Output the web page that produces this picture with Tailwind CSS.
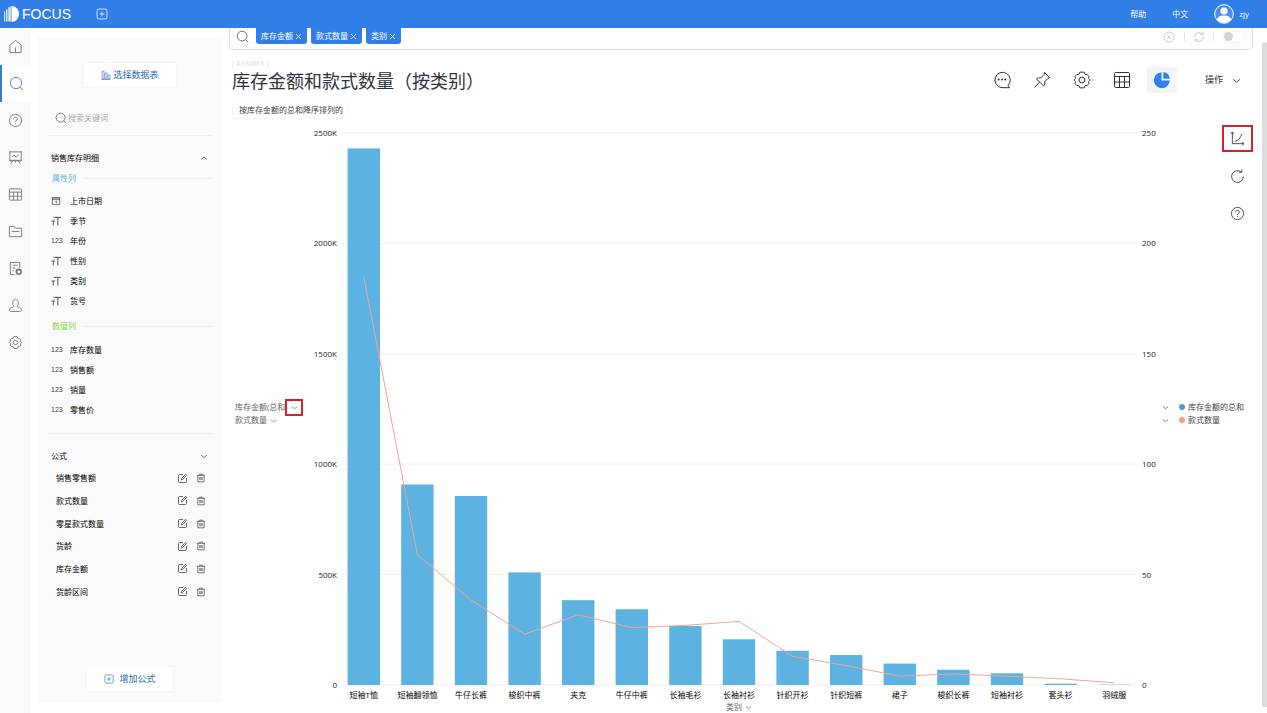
<!DOCTYPE html>
<html lang="zh-CN">
<head>
<meta charset="utf-8">
<title>FOCUS</title>
<script src="https://cdn.jsdelivr.net/npm/@tailwindcss/browser@4"></script>
</head>
<body class="h-screen overflow-hidden flex flex-col bg-white font-['Open_Sans','Noto_Sans_CJK_SC',sans-serif] text-[8px] leading-[10px] text-[#222]">

<svg class="hidden">
  <defs>
    <g id="search" fill="none" stroke="currentColor"><circle cx="7.5" cy="7.5" r="6"/><path d="M12 12l3 3"/></g>
    <g id="help" fill="none" stroke="currentColor"><circle cx="8" cy="8" r="6.5"/><path d="M6 6.6c0-1.3.9-2.1 2-2.1s2 .8 2 1.9c0 1.5-2 1.5-2 3.1M8 10.8v1"/></g>
    <g id="grid" fill="none" stroke="currentColor"><rect x="1.500" y="2" width="13" height="12" rx="1"/><path d="M1.500 5.500h13M1.500 9.800h13M5.800 5.500v8.500M10.200 5.500v8.500"/></g>
    <g id="gear" fill="none" stroke="currentColor"><path d="M6.300 1.700h3.400l.7 1.700 1.800.3 1.400 1.500-.4 1.500 1.300 1.300-1.300 1.300.4 1.500-1.400 1.500-1.800.3-.7 1.700H6.300l-.7-1.700-1.800-.3-1.400-1.500.4-1.500L1.500 8l1.300-1.300-.4-1.500 1.400-1.500 1.800-.3z" stroke-linejoin="round"/><circle cx="8" cy="8" r="2.300"/></g>
    <g id="down" fill="none" stroke="currentColor" stroke-width=".8"><path d="M1 3l3 2.500L7 3"/></g>
    <g id="up" fill="none" stroke="currentColor" stroke-width=".8"><path d="M1 5.500L4 3l3 2.500"/></g>
    <g id="close" fill="none" stroke="currentColor" stroke-width=".8"><path d="M1 1l5 5M6 1l-5 5"/></g>
    <g id="plusbox" fill="none" stroke="currentColor"><rect x="1" y="1" width="10" height="10" rx="2"/><path d="M6 3.500v5M3.500 6h5"/></g>
    <g id="text" fill="none" stroke="currentColor"><path d="M3 1.500h8M7.500 1.500v9M.5 5.500h4M2.500 5.500v5"/></g>
    <g id="date" fill="none" stroke="currentColor" stroke-width=".8"><path d="M1.500 2h8v7.500h-8zM.5 2h10M1.500 4h8M5 6l.8-.6V8.500"/></g>
    <g id="edit" fill="none" stroke="currentColor" stroke-width=".8"><path d="M6 1.500H2.500a1 1 0 0 0-1 1v6a1 1 0 0 0 1 1H8.500a1 1 0 0 0 1-1V5"/><path d="M4.300 7l.4-1.700L8.500 1.300l1 1L5.800 6.500z"/></g>
    <g id="trash" fill="none" stroke="currentColor" stroke-width=".8"><path d="M1 2.500h9M4 2.500V1.300h3v1.200M2 2.500v7.200h7V2.500M4.200 4.500v3.300M5.500 4.500v3.300M6.800 4.500v3.300"/></g>
  </defs>
</svg>

<header class="h-7 shrink-0 flex items-center bg-[#317ee9] text-white pl-1 pr-[18px]">
  <svg class="w-4 h-4" viewBox="0 0 16 16" fill="#fff"><path d="M7.500 0a7.500 8 0 0 1 0 16z"/><path d="M4.300 1.500L6.800.5v15H4.300z" opacity=".85"/><path d="M2 3.500h1.600v12H2z" opacity=".8"/><path d="M0 5.500h1.300v10H0z" opacity=".7"/></svg>
  <span class="ml-[2px] font-['Liberation_Sans',sans-serif] text-[14px] leading-[18px]">FOCUS</span>
  <button class="ml-[25px]" aria-label="新建"><svg class="w-3 h-3 opacity-80" viewBox="0 0 12 12"><use href="#plusbox"/></svg></button>
  <a href="#" class="ml-auto">帮助</a>
  <a href="#" class="ml-[26px]">中文</a>
  <a href="#" class="ml-[26px] flex items-center gap-[5px]"><svg class="w-5 h-5" viewBox="0 0 20 20"><circle cx="10" cy="10" r="9.300" fill="#4a8bea" stroke="#fff"/><circle cx="10" cy="7" r="3.600" fill="#fff"/><path d="M3 15.500c1-3.500 4-4 7-4s6 .5 7 4a9 9 0 0 1-14 0z" fill="#fff"/></svg>zjy</a>
</header>

<div class="flex-1 min-h-0 flex">
  <nav class="w-[31px] shrink-0 bg-[#fafafa] flex flex-col text-[#777]">
    <a href="#" aria-label="首页" class="h-[37px] flex items-center justify-center"><svg class="w-[15px] h-[15px]" viewBox="0 0 16 16" fill="none" stroke="currentColor"><path d="M2 6.500L8 1.500l6 5v8H2zM8 9v5.500"/></svg></a>
    <a href="#" aria-label="搜索" class="h-[37px] flex items-center justify-center bg-white border-l-2 border-[#317ad8] pr-px text-[#4f88c4]"><svg class="w-[15px] h-[15px]" viewBox="0 0 16 16"><use href="#search"/></svg></a>
    <a href="#" aria-label="帮助" class="h-[37px] flex items-center justify-center"><svg class="w-[15px] h-[15px]" viewBox="0 0 16 16"><use href="#help"/></svg></a>
    <a href="#" aria-label="看板" class="h-[37px] flex items-center justify-center"><svg class="w-[15px] h-[15px]" viewBox="0 0 16 16" fill="none" stroke="currentColor"><path d="M1 2h14M2 2v9h12V2M1 11.500h14M5 11.500l-2 3M11 11.500l2 3M8 11.500v2M4.500 7.500l2-2 2 2 3-2.500"/></svg></a>
    <a href="#" aria-label="数据表" class="h-[37px] flex items-center justify-center"><svg class="w-[15px] h-[15px]" viewBox="0 0 16 16"><use href="#grid"/></svg></a>
    <a href="#" aria-label="资源" class="h-[37px] flex items-center justify-center"><svg class="w-[15px] h-[15px]" viewBox="0 0 16 16" fill="none" stroke="currentColor"><path d="M1.500 13.500v-11h5l1.500 2h6.500v9zM4 8h8"/></svg></a>
    <a href="#" aria-label="任务" class="h-[37px] flex items-center justify-center"><svg class="w-[15px] h-[15px]" viewBox="0 0 16 16" fill="none" stroke="currentColor"><path d="M7 14.500H2.500v-13h10V7M5 4.500h5M5 7.500h3M5 10.500h1.500"/><circle cx="11.500" cy="11.500" r="2.500" stroke-width="1.800"/></svg></a>
    <a href="#" aria-label="用户" class="h-[37px] flex items-center justify-center"><svg class="w-[15px] h-[15px]" viewBox="0 0 16 16" fill="none" stroke="currentColor"><path d="M6.300 9C4.200 7 4.500 1.500 8 1.500s3.800 5.500 1.700 7.500c0 .8 4.800.8 4.800 4 0 1-1 1.300-2 1.300h-9c-1 0-2-.3-2-1.300 0-3.200 4.800-3.200 4.800-4z"/></svg></a>
    <a href="#" aria-label="设置" class="h-[37px] flex items-center justify-center"><svg class="w-[15px] h-[15px]" viewBox="0 0 16 16"><use href="#gear"/></svg></a>
  </nav>

  <aside class="w-[184px] shrink-0 ml-[7px] mt-[9px] mb-[10px] bg-[#fafafa] flex flex-col px-[10px] text-black">
    <button class="self-center mt-[26px] w-[92px] h-6 shrink-0 bg-white shadow-[0_0_2px_#eee] flex items-center justify-center gap-[2px] text-[9px] text-[#2f6fb5]"><svg class="w-[10px] h-[10px]" viewBox="0 0 10 10" fill="none" stroke="currentColor" stroke-width=".6"><path d="M1 1h2v8H1zM4 3h2v6H4zM7 5h2v4H7zM.5 9.500h9"/></svg>选择数据表</button>
    <label class="mt-[23px] h-4 shrink-0 flex items-center pl-[7px] gap-[1px]"><svg class="w-3 h-3 text-[#555]" viewBox="0 0 16 16"><use href="#search"/></svg><input type="text" aria-label="搜索关键词" placeholder="搜索关键词" class="flex-1 min-w-0 outline-none placeholder:text-[#aaa]"></label>
    <hr class="mt-[9px] border-[#efefef]">
    <button class="mt-[17px] h-[10px] shrink-0 flex items-center justify-between pl-[3px] pr-1">销售库存明细<svg class="w-2 h-2 text-[#555]" viewBox="0 0 8 8"><use href="#up"/></svg></button>
    <div class="mt-[10px] flex items-center gap-2 pl-1 text-[#5db4d4]">属性列<hr class="flex-1 border-[#efefef]"></div>
    <ul id="attrs" class="mt-2"></ul>
    <div class="mt-[10px] flex items-center gap-2 pl-1 text-[#86d24a]">数值列<hr class="flex-1 border-[#efefef]"></div>
    <ul id="measures" class="mt-[9px]"></ul>
    <hr class="mt-[13px] border-[#efefef]">
    <button class="mt-[17px] h-[10px] shrink-0 flex items-center justify-between pl-[3px] pr-1">公式<svg class="w-2 h-2 text-[#555]" viewBox="0 0 8 8"><use href="#down"/></svg></button>
    <ul id="formulas" class="mt-[6px] h-[136px] shrink-0 flex flex-col justify-around"></ul>
    <button class="self-center mt-auto mb-[12px] w-[86px] h-6 shrink-0 bg-white shadow-[0_0_2px_#eee] flex items-center justify-center gap-[5px] text-[9px] text-[#2f6fb5]"><svg class="w-[10px] h-[10px]" viewBox="0 0 12 12" stroke-width=".8"><use href="#plusbox"/></svg>增加公式</button>
  </aside>

  <main class="flex-1 min-w-0 ml-[7px] flex flex-col">
    <div class="h-[22px] shrink-0 flex items-start border border-t-0 border-[#ddd] rounded-b-[5px] pl-[6px]">
      <svg class="w-[13px] h-[13px] mt-[2px] text-[#555]" viewBox="0 0 16 16"><use href="#search"/></svg>
      <div class="ml-[7px] flex gap-1 text-white">
        <button class="h-4 px-[5px] bg-[#317ee9] rounded-b-[3px] flex items-center gap-[2px]">库存金额<svg class="w-[7px] h-[7px]" viewBox="0 0 7 7"><use href="#close"/></svg></button>
        <button class="h-4 px-[5px] bg-[#317ee9] rounded-b-[3px] flex items-center gap-[2px]">款式数量<svg class="w-[7px] h-[7px]" viewBox="0 0 7 7"><use href="#close"/></svg></button>
        <button class="h-4 px-[5px] bg-[#317ee9] rounded-b-[3px] flex items-center gap-[2px]">类别<svg class="w-[7px] h-[7px]" viewBox="0 0 7 7"><use href="#close"/></svg></button>
      </div>
      <div class="ml-auto h-[17px] pr-[6px] flex items-center text-[#ccc]">
        <button aria-label="清除"><svg class="w-3 h-3" viewBox="0 0 12 12" fill="none" stroke="currentColor"><circle cx="6" cy="6" r="5"/><path d="M4.300 4.300l3.400 3.400M7.700 4.300L4.300 7.700"/></svg></button>
        <span class="ml-[9px] w-px h-2 bg-[#e2e2e2]"></span>
        <button class="ml-[8px]" aria-label="刷新"><svg class="w-3 h-3" viewBox="0 0 12 12" fill="none" stroke="currentColor"><path d="M1.500 6A4.500 4.500 0 0 1 9.500 3.200M10.500 6A4.500 4.500 0 0 1 2.500 8.800M10 1v2.500H7.500M2 11V8.500h2.500"/></svg></button>
        <span class="ml-[8px] w-px h-2 bg-[#e2e2e2]"></span>
        <input type="checkbox" aria-label="自动" class="ml-[8px] appearance-none w-6 h-3 rounded-full border border-[#f2f2f2] before:block before:w-[9px] before:h-[9px] before:rounded-full before:bg-[#d2d2d2] before:ml-px">
      </div>
    </div>

    <div class="mt-[9px] h-9 shrink-0 flex">
      <div class="pl-[3px]">
        <p class="text-[7px] leading-[10px] text-[#ddd]">[ ANSWER ]</p>
        <h1 class="text-[18px] leading-6 text-[#2b3442]">库存金额和款式数量（按类别）</h1>
      </div>
      <div class="ml-auto mt-[8px] h-[26px] flex items-center gap-[10px] text-[#2b3442]">
        <button aria-label="评论" class="w-[30px] h-[26px] flex items-center justify-center"><svg class="w-[18px] h-[18px]" viewBox="0 0 18 18" fill="none" stroke="currentColor"><path d="M15 14.500A7.700 7.700 0 1 0 9 16.700h7.500z"/><g fill="currentColor" stroke="none"><circle cx="5.700" cy="8.500" r="1"/><circle cx="9" cy="8.500" r="1"/><circle cx="12.300" cy="8.500" r="1"/></g></svg></button>
        <button aria-label="固定" class="w-[30px] h-[26px] flex items-center justify-center"><svg class="w-[18px] h-[18px]" viewBox="0 0 18 18" fill="none" stroke="currentColor" stroke-linejoin="round"><path d="M11.500 1.500l5 5-1.500.8-3.300 3.500c.4 1.800 0 3-1 4.200L3.500 8c1.200-1.200 2.600-1.400 4.200-1L11 3.500zM6.500 11.200l-5 5.300"/></svg></button>
        <button aria-label="设置" class="w-[30px] h-[26px] flex items-center justify-center"><svg class="w-5 h-5" viewBox="0 0 16 16" stroke-width=".8"><use href="#gear"/></svg></button>
        <button aria-label="表格" class="w-[30px] h-[26px] flex items-center justify-center"><svg class="w-[18px] h-[18px]" viewBox="0 0 18 18" fill="none" stroke="currentColor"><rect x="1.500" y="1.500" width="15" height="15" rx="1"/><path d="M1.500 5.500h15M1.500 11h15M6.500 5.500v11M11.500 5.500v11"/></svg></button>
        <button aria-label="图表" class="w-[30px] h-[26px] flex items-center justify-center bg-[#f3f4f5] rounded-[3px]"><svg class="w-[18px] h-[18px]" viewBox="0 0 18 18" fill="#317ee9"><path d="M8.500 1.200V9.500h8.300A8 8 0 1 1 8.500 1.200z"/><path d="M10.300 1a7.500 7.500 0 0 1 6.500 6.700h-6.500z"/></svg></button>
      </div>
      <button class="ml-[28px] mr-[12px] mt-[8px] h-[26px] flex items-center gap-[9px] text-[9px] text-[#333]">操作<svg class="w-[9px] h-[9px]" viewBox="0 0 8 8"><use href="#down"/></svg></button>
    </div>

    <div class="mt-[6px] ml-[3px] h-[18px] shrink-0 self-start border border-[#f8f8f8] px-[6px] flex items-center text-[#444]">按库存金额的总和降序排列的</div>

    <section class="flex-1 min-h-0 flex">
      <div class="w-[76px] shrink-0 pl-[6px] pb-[5px] flex flex-col justify-center gap-[3px] text-[#666]">
        <div class="h-[10px] flex items-center whitespace-nowrap">库存金额(总和<button aria-label="库存金额选项" class="w-[18px] h-[17px] shrink-0 border-2 border-[#d2232a] flex items-center justify-center"><svg class="w-[7px] h-[7px]" viewBox="0 0 8 8"><use href="#down"/></svg></button></div>
        <button class="h-[10px] flex items-center gap-[3px]">款式数量<svg class="w-[7px] h-[7px]" viewBox="0 0 8 8"><use href="#down"/></svg></button>
      </div>
      <div class="w-8 shrink-0 pt-[9px] pb-[23px] flex flex-col justify-between text-right text-[#222]">
        <span>2500K</span><span>2000K</span><span>1500K</span><span>1000K</span><span>500K</span><span>0</span>
      </div>
      <div class="flex-1 min-w-0 pt-[14px] pb-px flex flex-col">
        <div class="flex-1 min-h-0">
          <svg class="block w-full h-full overflow-visible" viewBox="0 0 804 552" preserveAspectRatio="none">
            <path d="M5 0H799M5 110.400H799M5 220.800H799M5 331.200H799M5 441.600H799M5 552H799" stroke="#f2f2f2" vector-effect="non-scaling-stroke"/>
            <g id="bars" fill="#5cb2e1"></g>
            <polyline id="line" fill="none" stroke="#f0a592" stroke-width="1" vector-effect="non-scaling-stroke"/>
          </svg>
        </div>
        <div id="cats" class="mt-[5px] h-[10px] shrink-0 grid grid-cols-[repeat(15,minmax(0,1fr))] text-center whitespace-nowrap text-black"></div>
        <button class="mt-[2px] h-[10px] shrink-0 self-center flex items-center gap-[3px] text-[#666]">类别<svg class="w-[7px] h-[7px]" viewBox="0 0 8 8"><use href="#down"/></svg></button>
      </div>
      <div class="w-5 shrink-0 pl-px pt-[9px] pb-[23px] flex flex-col justify-between text-[#222]">
        <span>250</span><span>200</span><span>150</span><span>100</span><span>50</span><span>0</span>
      </div>
      <div class="w-[92px] shrink-0 pt-[6px] flex flex-col text-[#444]">
        <div class="self-end flex flex-col gap-[11px]">
          <button aria-label="坐标轴" class="w-[31px] h-[27px] border-2 border-[#d2232a] flex items-center justify-center"><svg class="w-[15px] h-[15px]" viewBox="0 0 16 16" fill="none" stroke="currentColor"><path d="M2.500 1v12.500H15M1 3l1.500-2L4 3M13 12l2 1.500-2 1.500M5 11c4-.5 6-3.500 7.500-8"/></svg></button>
          <button aria-label="刷新" class="w-[31px] h-[26px] flex items-center justify-center"><svg class="w-[15px] h-[15px]" viewBox="0 0 16 16" fill="none" stroke="currentColor"><path d="M14.300 8A6.300 6.300 0 1 1 12 3.200M12.500.8v2.700H9.800"/></svg></button>
          <button aria-label="帮助" class="w-[31px] h-[26px] flex items-center justify-center"><svg class="w-[15px] h-[15px]" viewBox="0 0 16 16"><use href="#help"/></svg></button>
        </div>
        <div class="my-auto pb-[113px] pl-px flex flex-col gap-[3px]">
          <button class="flex items-center"><svg class="w-[7px] h-[7px]" viewBox="0 0 8 6"><use href="#down"/></svg><span class="ml-[10px] w-[6px] h-[6px] rounded-full bg-[#4a9fd0]"></span><span class="ml-[3px]">库存金额的总和</span></button>
          <button class="flex items-center"><svg class="w-[7px] h-[7px]" viewBox="0 0 8 6"><use href="#down"/></svg><span class="ml-[10px] w-[6px] h-[6px] rounded-full bg-[#f3a184]"></span><span class="ml-[3px]">款式数量</span></button>
        </div>
      </div>
    </section>
  </main>
  <div class="ml-[9px] mt-[14px] mb-[6px] w-[5px] shrink-0 bg-[#dcdcdc] rounded-t-[2px]"></div>
</div>

<script>
const num = '<span class="w-[19px] text-[7px] text-[#444] font-[\'Liberation_Sans\',sans-serif]">123</span>';
const icon = id => `<span class="w-[19px]"><svg class="w-[10px] h-[10px] text-[#444]" viewBox="0 0 11 11"><use href="#${id}"/></svg></span>`;
const row = (ic, t) => `<li class="h-5 flex items-center pl-[3px]">${ic}${t}</li>`;
document.getElementById('attrs').innerHTML = [['date','上市日期'],['text','季节'],['','年份'],['text','性别'],['text','类别'],['text','货号']].map(([i, t]) => row(i ? icon(i) : num, t)).join('');
document.getElementById('measures').innerHTML = ['库存数量','销售额','销量','零售价'].map(t => row(num, t)).join('');
document.getElementById('formulas').innerHTML = ['销售零售额','款式数量','零星款式数量','货龄','库存金额','货龄区间'].map(t => `<li class="flex items-center pl-2 pr-[6px]">${t}<button aria-label="编辑" class="ml-auto"><svg class="w-[11px] h-[11px] text-[#444]" viewBox="0 0 11 11"><use href="#edit"/></svg></button><button aria-label="删除" class="ml-2"><svg class="w-[10px] h-[10px] text-[#444]" viewBox="0 0 11 11"><use href="#trash"/></svg></button></li>`).join('');

const data = [
  ['短袖T恤',2430,185],['短袖翻领恤',908,59],['牛仔长裤',856,38.5],['梭织中裤',510,23],['夹克',384,31.8],
  ['牛仔中裤',343,26],['长袖毛衫',267,27],['长袖衬衫',207,28.8],['针织开衫',155,13],['针织短裤',136,8.8],
  ['裙子',97,4],['梭织长裤',69,5],['短袖衬衫',53,4],['套头衫',6,2.8],['羽绒服',1.5,1]];
const step = 804 / data.length;
document.getElementById('bars').innerHTML = data.map(([, v], i) => `<rect x="${i * step + 10.6}" y="${552 - v * 0.2208}" width="32.4" height="${v * 0.2208}"/>`).join('');
document.getElementById('line').setAttribute('points', data.map(([, , n], i) => `${(i + 0.5) * step},${552 - n * 2.208}`).join(' '));
document.getElementById('cats').innerHTML = data.map(([t]) => `<span>${t}</span>`).join('');
</script>
</body>
</html>
